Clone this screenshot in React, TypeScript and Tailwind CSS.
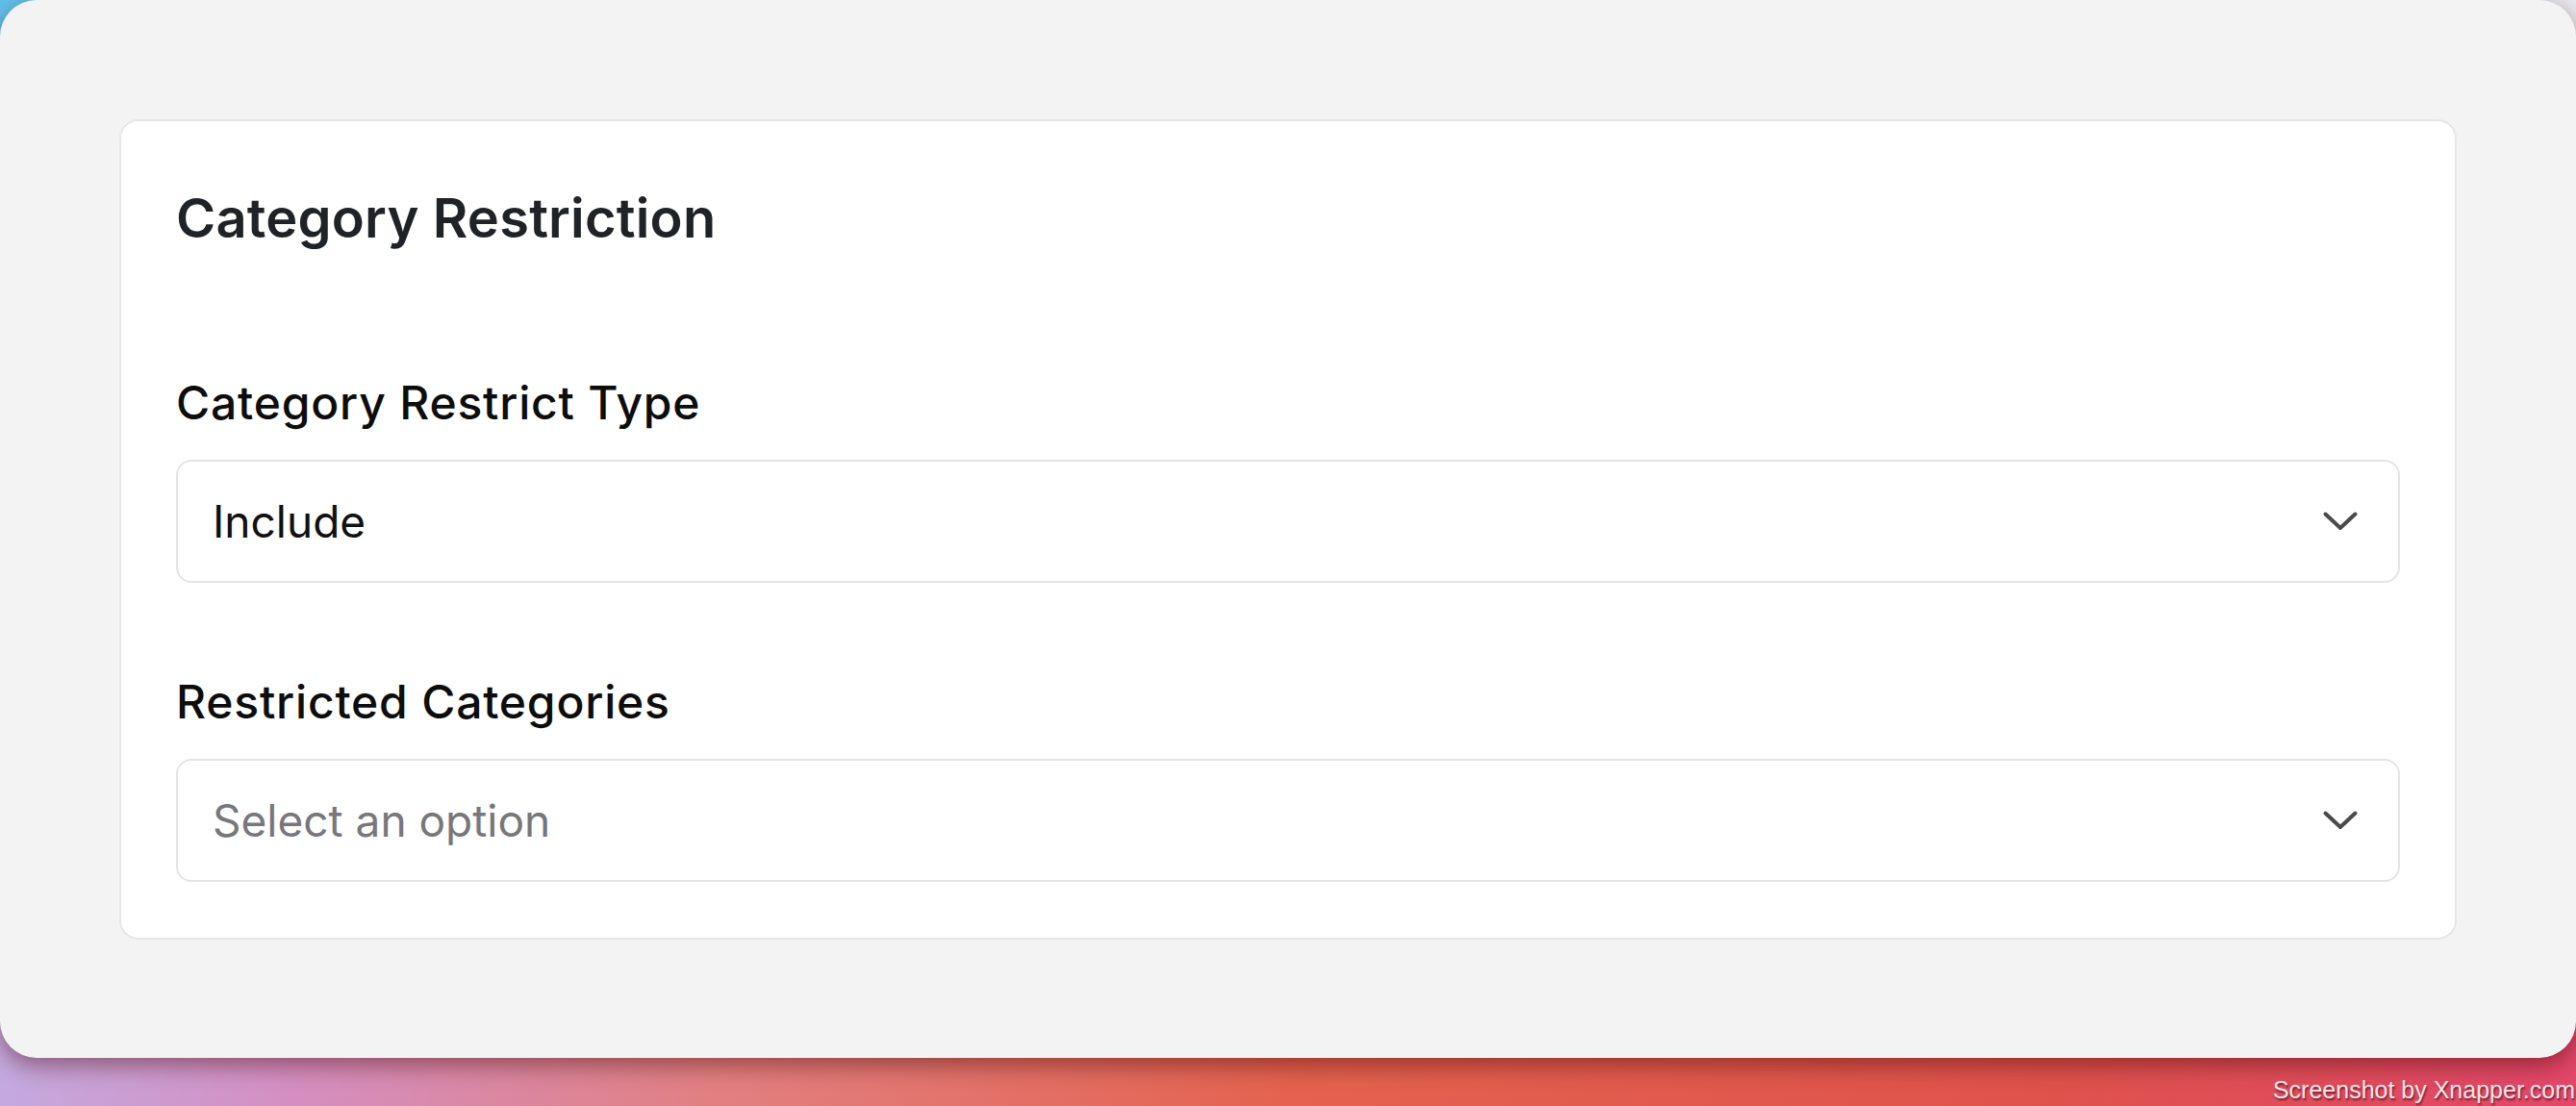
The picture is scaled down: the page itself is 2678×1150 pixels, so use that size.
import React from "react";

const ChevronDown: React.FC = () => (
  <svg width="36" height="20" viewBox="0 0 36 20" fill="none" className="shrink-0">
    <path
      d="M2.5 2.5 L18 17 L33.5 2.5"
      stroke="#4a4a4d"
      strokeWidth="4"
      strokeLinecap="round"
      strokeLinejoin="round"
    />
  </svg>
);

interface SelectFieldProps {
  label: string;
  value?: string;
  placeholder?: string;
}

const SelectField: React.FC<SelectFieldProps> = ({ label, value, placeholder }) => (
  <div className="flex flex-col gap-[30px]">
    <label className="text-[48px] leading-[58px] font-medium tracking-[0.8px] text-[#0d0d0d]">
      {label}
    </label>
    <button
      type="button"
      className="flex h-[128px] w-full items-center justify-between rounded-[16px] border-2 border-[#e4e4e6] bg-white pl-[36px] pr-[42px] text-left"
    >
      {value ? (
        <span className="text-[46px] leading-[56px] text-[#111111]">{value}</span>
      ) : (
        <span className="text-[46px] leading-[56px] text-[#77777c]">{placeholder}</span>
      )}
      <ChevronDown />
    </button>
  </div>
);

export default function App() {
  return (
    <div
      className="flex h-[1150px] w-[2678px] flex-col overflow-hidden bg-[linear-gradient(90deg,#c4a9df_0%,#d48fc2_11%,#e27f80_28%,#e4624f_50%,#df524c_80%,#e2476a_100%)]"
      style={{ fontFamily: "Inter, 'Noto Sans', sans-serif" }}
    >
      <div className="relative h-[1100px] w-full shrink-0">
        <div className="absolute inset-x-0 top-0 h-[60px] bg-[linear-gradient(90deg,#62c1ee_0%,#9fd6f0_50%,#e8e8ee_100%)]" />
        <div className="relative h-full w-full rounded-[38px] bg-[#f3f3f3] px-[124px] pt-[124px] shadow-[0_8px_24px_rgba(60,0,0,0.45)]">
          <div className="flex flex-col rounded-[20px] border-2 border-[#e6e6e8] bg-white px-[57px] pt-[67px] pb-[58px]">
            <h2 className="text-[56px] leading-[68px] font-semibold tracking-[0.2px] text-[#1f2226]">
              Category Restriction
            </h2>
            <div className="mt-[129px] flex flex-col gap-[95px]">
              <SelectField label="Category Restrict Type" value="Include" />
              <SelectField label="Restricted Categories" placeholder="Select an option" />
            </div>
          </div>
        </div>
      </div>
      <div className="flex flex-1 justify-end pt-[21px] pr-[1px]">
        <span
          className="text-[25px] leading-[25px] text-[#f8e6ec]"
          style={{
            fontFamily: "'Liberation Sans', Arial, sans-serif",
            textShadow: "1px 2px 2px rgba(60,0,10,0.65)",
          }}
        >
          Screenshot by Xnapper.com
        </span>
      </div>
    </div>
  );
}
